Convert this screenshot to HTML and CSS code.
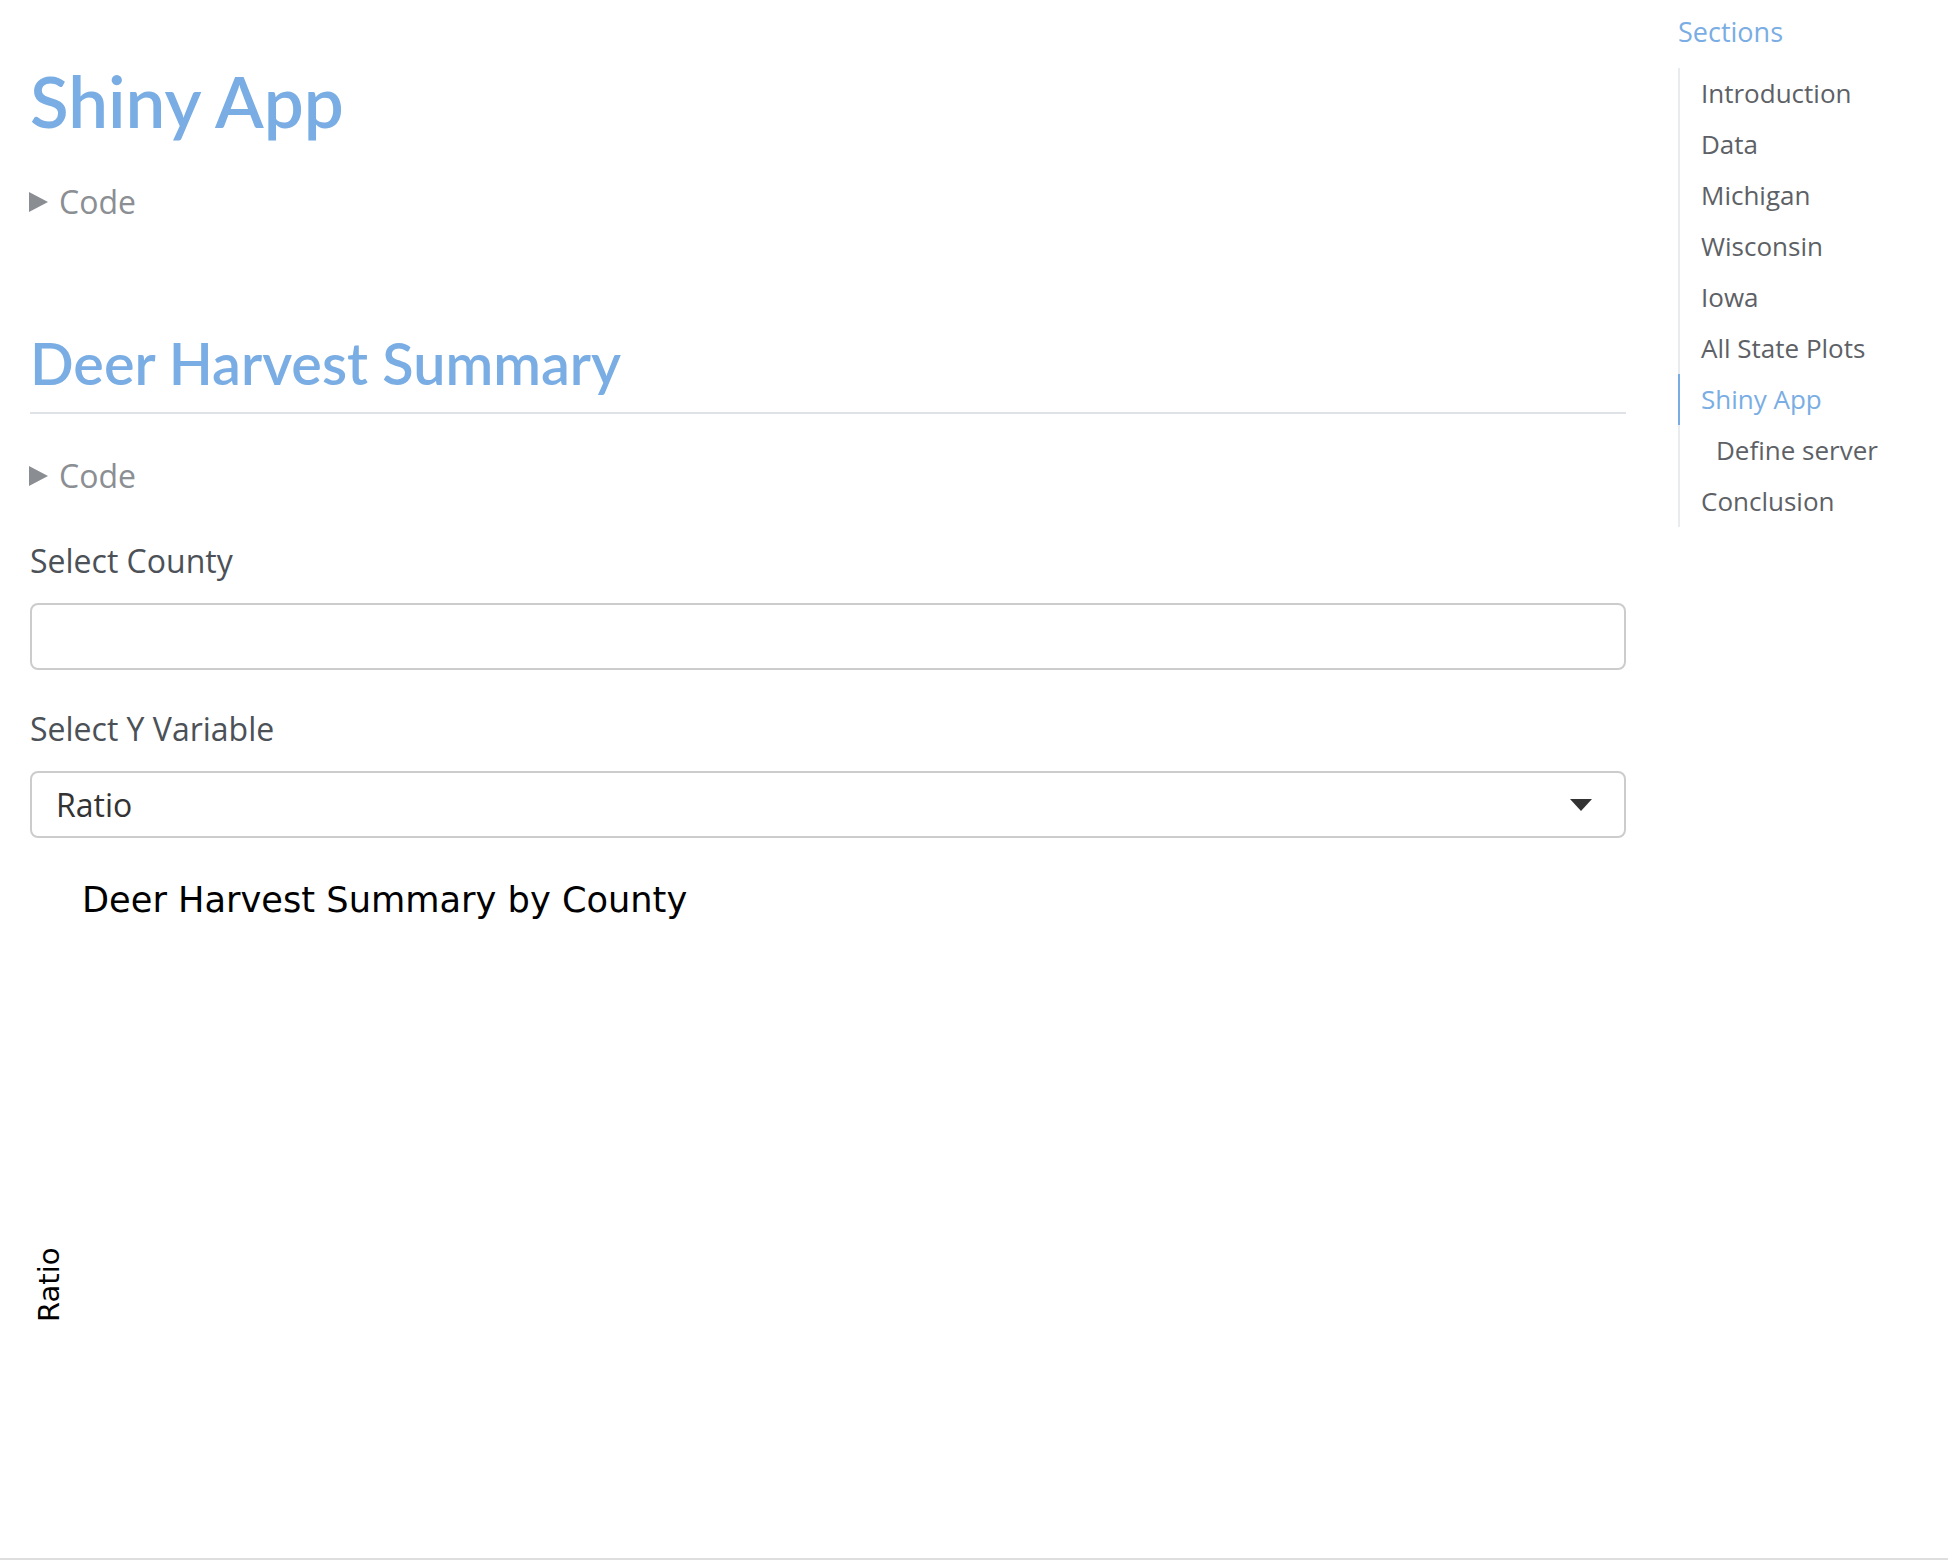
FILE: index.html
```html
<!DOCTYPE html>
<html lang="en">
<head>
<meta charset="utf-8">
<title>Shiny App</title>
<link rel="stylesheet" href="styles.css">
</head>
<body>
<div class="page">
  <main class="content">
    <h1 class="title">Shiny App</h1>
    <div class="fold"><span class="tri"></span><span>Code</span></div>

    <h2 class="section">Deer Harvest Summary</h2>
    <div class="fold fold-2"><span class="tri"></span><span>Code</span></div>

    <label class="field-label">Select County</label>
    <div class="input-box"></div>

    <label class="field-label field-label-2">Select Y Variable</label>
    <div class="select-box">
      <span class="select-value">Ratio</span>
      <span class="caret"></span>
    </div>

    <div class="plot">
      <div class="plot-title">Deer Harvest Summary by County</div>
      <div class="y-title">Ratio</div>
    </div>
  </main>

  <aside class="toc">
    <div class="toc-title">Sections</div>
    <ul class="toc-list">
      <li class="toc-item">Introduction</li>
      <li class="toc-item">Data</li>
      <li class="toc-item">Michigan</li>
      <li class="toc-item">Wisconsin</li>
      <li class="toc-item">Iowa</li>
      <li class="toc-item">All State Plots</li>
      <li class="toc-item active">Shiny App</li>
      <li class="toc-item sub">Define server</li>
      <li class="toc-item">Conclusion</li>
    </ul>
  </aside>
</div>
<div class="bottom-rule"></div>
</body>
</html>
```

FILE: styles.css
```css
html, body {
  margin: 0;
  padding: 0;
  background: #ffffff;
}

body {
  font-family: "Open Sans", "Noto Sans", sans-serif;
  color: #4b5157;
  width: 1948px;
  height: 1560px;
  overflow: hidden;
}

.page {
  display: flex;
  align-items: flex-start;
  padding-left: 30px;
  gap: 52px;
}

.content {
  width: 1596px;
  flex: none;
  padding-top: 59px;
}

.title {
  margin: 0;
  font-family: Lato, "Open Sans", sans-serif;
  font-size: 71px;
  line-height: 84px;
  font-weight: 600;
  color: #79ade3;
}

.fold {
  display: flex;
  align-items: center;
  gap: 11px;
  margin-top: 33px;
  font-size: 32px;
  line-height: 51px;
  color: #8b8e93;
}

.tri {
  width: 0;
  height: 0;
  border-top: 10px solid transparent;
  border-bottom: 10px solid transparent;
  border-left: 19px solid #8a8d92;
  margin-left: -1px;
}

.section {
  margin: 98px 0 0 0;
  font-family: Lato, "Open Sans", sans-serif;
  font-size: 57.5px;
  line-height: 76px;
  font-weight: 600;
  color: #79ade3;
  padding-bottom: 11px;
  border-bottom: 2px solid #dfe3e7;
}

.fold-2 {
  margin-top: 36px;
}

.field-label {
  display: block;
  margin-top: 34px;
  font-size: 32px;
  line-height: 51px;
  color: #4b5157;
}

.field-label-2 {
  margin-top: 33px;
}

.input-box,
.select-box {
  box-sizing: border-box;
  margin-top: 17px;
  height: 67px;
  border: 2px solid #cccccc;
  border-radius: 8px;
  background: #ffffff;
}

.select-box {
  display: flex;
  align-items: center;
  justify-content: space-between;
  padding: 0 32px 0 24px;
}

.select-value {
  font-size: 32px;
  color: #333333;
}

.caret {
  width: 0;
  height: 0;
  border-left: 11px solid transparent;
  border-right: 11px solid transparent;
  border-top: 12px solid #333333;
}

.plot {
  position: relative;
  height: 700px;
}

.plot-title {
  position: absolute;
  left: 52px;
  top: 40px;
  font-family: "DejaVu Sans", Verdana, sans-serif;
  font-size: 35.2px;
  line-height: 44px;
  color: #000000;
  white-space: nowrap;
}

.y-title {
  position: absolute;
  left: 5px;
  top: 410px;
  width: 29px;
  height: 74px;
  font-family: "DejaVu Sans", Verdana, sans-serif;
  font-size: 29px;
  line-height: 29px;
  color: #000000;
  writing-mode: vertical-rl;
  transform: rotate(180deg);
}

.toc {
  flex: 1;
  padding-top: 9px;
}

.toc-title {
  font-size: 27px;
  line-height: 46px;
  color: #79ade3;
}

.toc-list {
  list-style: none;
  margin: 13px 0 0 0;
  padding: 0;
  border-left: 2px solid #e9ecef;
}

.toc-item {
  font-size: 26px;
  line-height: 51px;
  padding-left: 21px;
  color: #5d6166;
  margin-left: -2px;
  border-left: 2px solid transparent;
}

.toc-item.active {
  color: #79ade3;
  border-left-color: #79ade3;
}

.toc-item.sub {
  padding-left: 36px;
}

.bottom-rule {
  position: fixed;
  left: 0;
  right: 0;
  bottom: 0;
  height: 2px;
  background: #dedede;
}
```
